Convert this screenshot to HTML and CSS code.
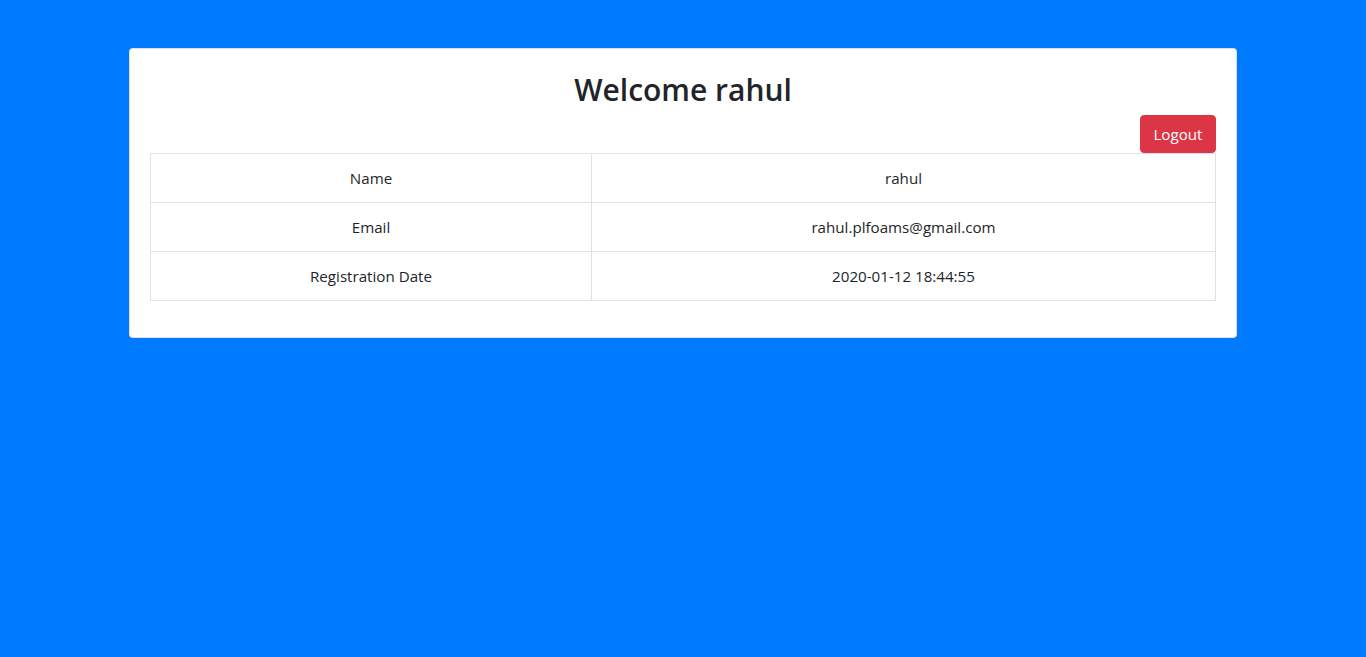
FILE: index.html
```html
<!DOCTYPE html>
<html lang="en">
<head>
<meta charset="utf-8">
<title>Welcome</title>
<link rel="stylesheet" href="styles.css">
</head>
<body>
<main class="page">
  <section class="card">
    <h2 class="title">Welcome rahul</h2>
    <div class="actions">
      <button class="btn-logout" type="button">Logout</button>
    </div>
    <table class="info">
      <colgroup>
        <col class="col-label">
        <col>
      </colgroup>
      <tbody>
        <tr><td>Name</td><td>rahul</td></tr>
        <tr><td>Email</td><td>rahul.plfoams@gmail.com</td></tr>
        <tr><td>Registration Date</td><td>2020-01-12 18:44:55</td></tr>
      </tbody>
    </table>
  </section>
</main>
</body>
</html>
```
FILE: styles.css
```css
html, body {
  margin: 0;
  padding: 0;
}
body {
  background: #007bff;
  color: #212529;
  font-family: "Open Sans", "Noto Sans", sans-serif;
  font-size: 15.15px;
  line-height: 24px;
  min-height: 657px;
}
.page {
  padding-top: 48px;
}
.card {
  box-sizing: border-box;
  width: 1108px;
  margin: 0 auto;
  background: #fff;
  border: 1px solid rgba(0, 0, 0, 0.125);
  border-radius: 4px;
  padding: 20px;
}
.title {
  margin: 0 0 6px;
  padding-top: 2px;
  text-align: center;
  font-size: 30px;
  font-weight: 600;
  line-height: 38.4px;
  color: #212529;
}
.actions {
  display: flex;
  justify-content: flex-end;
}
.btn-logout {
  font-family: inherit;
  font-size: 15.15px;
  line-height: 24px;
  color: #fff;
  background: #dc3545;
  border: 1px solid #dc3545;
  border-radius: 4px;
  padding: 6px 12.5px;
  height: 38px;
  cursor: pointer;
}
.info {
  width: 100%;
  border-collapse: collapse;
  table-layout: fixed;
  margin-bottom: 16px;
}
.col-label {
  width: 441px;
}
.info td {
  border: 1px solid #dee2e6;
  padding: 12px;
  text-align: center;
  vertical-align: top;
}
```
